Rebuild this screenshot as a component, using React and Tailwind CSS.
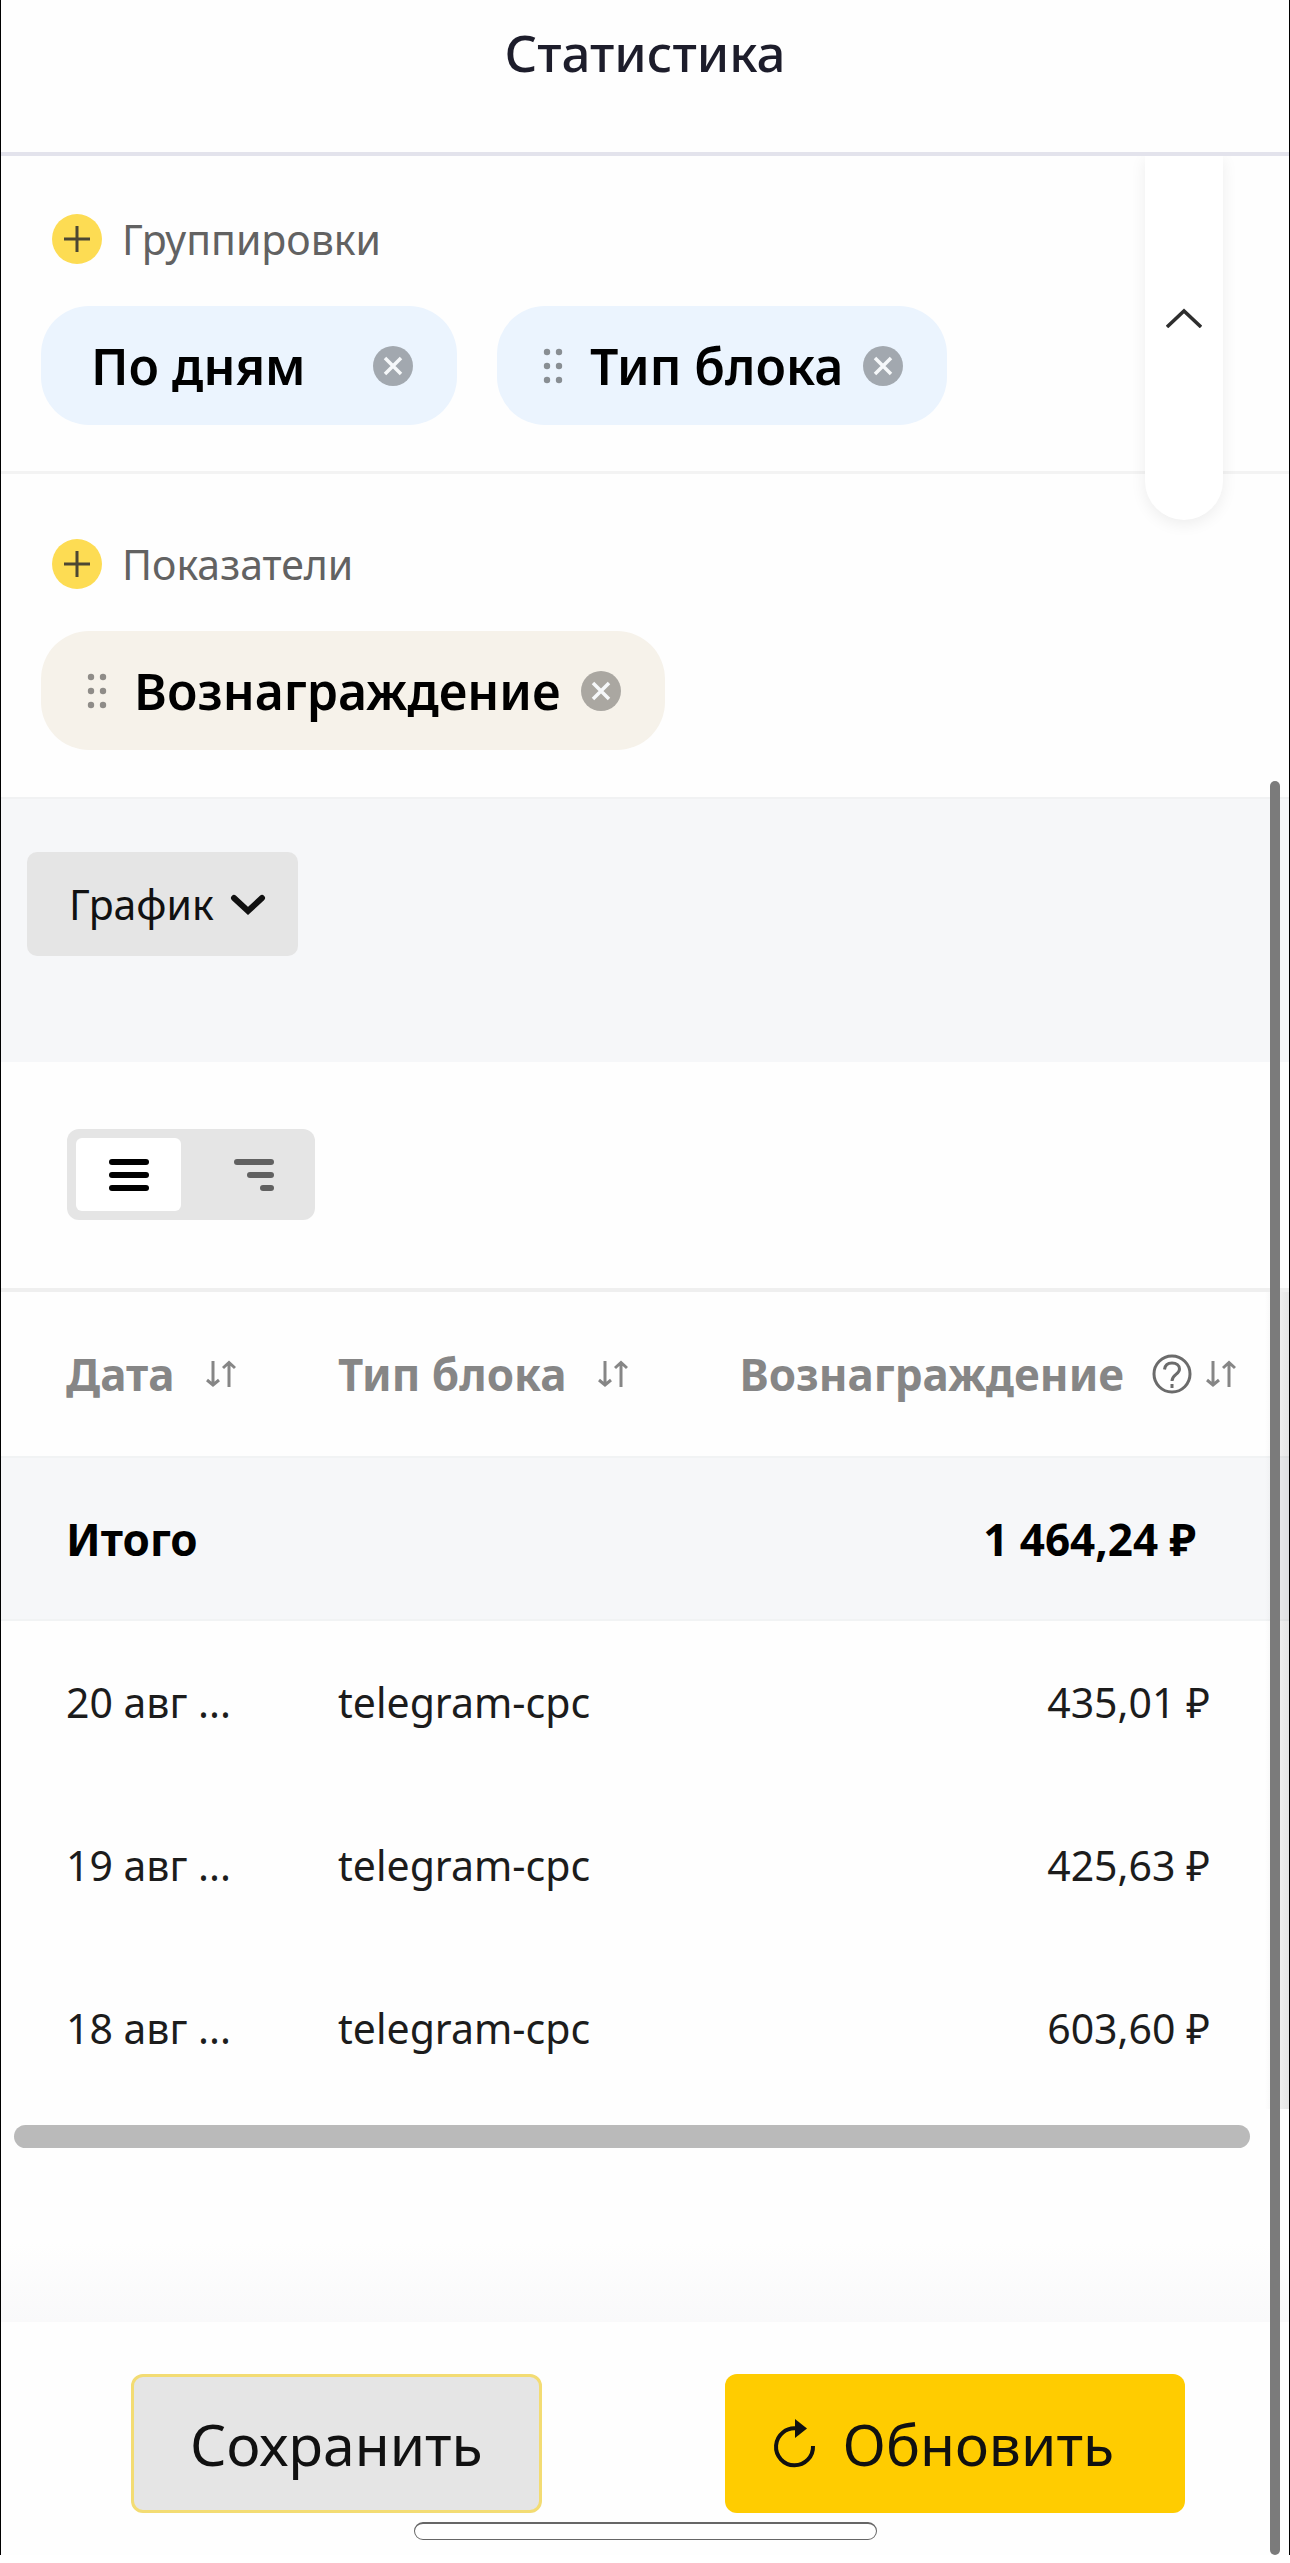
import { useState } from "react";

const rows = [
  { id: 1, date: "20 авг ...", block: "telegram-cpc", reward: "435,01 ₽" },
  { id: 2, date: "19 авг ...", block: "telegram-cpc", reward: "425,63 ₽" },
  { id: 3, date: "18 авг ...", block: "telegram-cpc", reward: "603,60 ₽" },
];

function SortIcon() {
  return (
    <svg
      className="w-8 h-7 shrink-0"
      fill="none"
      stroke="currentColor"
      strokeWidth={3}
      viewBox="0 0 32 28"
    >
      <path d="M9 1v24M3 20l6 5 6-5M25 27V3M19 8l6-5.500 6 5.500" />
    </svg>
  );
}

function HelpIcon() {
  return (
    <svg
      className="w-10 h-10 shrink-0"
      fill="none"
      stroke="#6b6b6b"
      strokeWidth={3}
      viewBox="0 0 40 40"
    >
      <circle cx="20" cy="20" r="18" />
      <path d="M12.500 15.500c.5-4.500 3.500-6.500 7.500-6.500 4.500 0 7.500 2.500 7.500 6 0 5.500-7.500 5.500-7.500 12" />
      <path d="M20 30v4" />
    </svg>
  );
}

function AddLabel({ text }) {
  return (
    <div className="flex items-center gap-5">
      <button
        aria-label={`Добавить: ${text}`}
        className="w-[50px] h-[50px] rounded-full bg-[#fddc53] flex items-center justify-center"
      >
        <svg
          className="w-7 h-7"
          stroke="#4c4733"
          strokeWidth={3}
          viewBox="0 0 28 28"
        >
          <path d="M14 1v26M1 14h26" />
        </svg>
      </button>
      <h2 className="text-[41px] leading-[50px] text-[#626262]">{text}</h2>
    </div>
  );
}

function DragHandle() {
  return (
    <svg
      className="w-5 h-9 shrink-0"
      fill="currentColor"
      fillOpacity={0.42}
      viewBox="0 0 20 36"
    >
      <circle cx="4" cy="4" r="3.200" />
      <circle cx="16" cy="4" r="3.200" />
      <circle cx="4" cy="18" r="3.200" />
      <circle cx="16" cy="18" r="3.200" />
      <circle cx="4" cy="32" r="3.200" />
      <circle cx="16" cy="32" r="3.200" />
    </svg>
  );
}

function RemoveButton({ label }) {
  return (
    <button aria-label={`Удалить: ${label}`} className="shrink-0">
      <svg className="w-10 h-10" viewBox="0 0 40 40">
        <circle cx="20" cy="20" r="20" fill="#000" fillOpacity={0.31} />
        <path
          d="M12 12l16 16M28 12L12 28"
          stroke="#f6f8fa"
          strokeWidth={3.5}
        />
      </svg>
    </button>
  );
}

export default function App() {
  const [view, setView] = useState("list");

  return (
    <div className="min-h-screen bg-white pb-2 font-['Noto_Sans',sans-serif] text-black">
      <div className="relative border-x border-black bg-[#fefefe]">
        {/* Header */}
        <header className="border-b-4 border-[#e3e3ec] pt-4 pb-16 text-center">
          <h1 className="text-[51px] leading-[72px] font-medium text-[#1d1d2b]">
            Статистика
          </h1>
        </header>

        {/* Filters */}
        <div className="relative">
          <section className="flex flex-col gap-[42px] border-b-[3px] border-[#f3f3f3] px-10 pt-[58px] pb-[46px]">
            <div className="pl-[11px]">
              <AddLabel text="Группировки" />
            </div>
            <div className="flex gap-10">
              <div className="flex items-center justify-between min-w-[416px] h-[119px] rounded-[48px] bg-[#ebf4fe] pl-[50px] pr-11">
                <span className="text-[50px] leading-[72px] font-semibold">
                  По дням
                </span>
                <RemoveButton label="По дням" />
              </div>
              <div className="flex items-center h-[119px] rounded-[48px] bg-[#ebf4fe] pl-[46px] pr-11">
                <DragHandle />
                <span className="ml-[27px] mr-5 text-[50px] leading-[72px] font-semibold">
                  Тип блока
                </span>
                <RemoveButton label="Тип блока" />
              </div>
            </div>
          </section>

          <section className="flex flex-col gap-[42px] px-10 pt-[65px] pb-[47px]">
            <div className="pl-[11px]">
              <AddLabel text="Показатели" />
            </div>
            <div className="flex">
              <div className="flex items-center h-[119px] rounded-[48px] bg-[#f6f2ea] pl-[46px] pr-11">
                <DragHandle />
                <span className="ml-[27px] mr-5 text-[50px] leading-[72px] font-semibold">
                  Вознаграждение
                </span>
                <RemoveButton label="Вознаграждение" />
              </div>
            </div>
          </section>

          <button
            aria-label="Свернуть"
            className="absolute top-0 right-[66px] w-[78px] h-[364px] rounded-b-full bg-white pb-10 flex items-center justify-center shadow-[0_4px_16px_rgba(0,0,0,0.07)] [clip-path:inset(0_-40px_-40px_-40px)]"
          >
            <svg
              className="w-9 h-5"
              fill="none"
              stroke="#2e2e2e"
              strokeWidth={3.5}
              viewBox="0 0 36 20"
            >
              <path d="M1 19L18 3l17 16" />
            </svg>
          </button>
        </div>

        {/* Chart */}
        <section className="bg-[#f6f7f9] border-t-2 border-[#f1f2f3] pt-[53px] pb-[106px] pl-[26px]">
          <button className="flex items-center gap-4 h-[104px] rounded-[10px] bg-[#e5e5e5] pl-[42px] pr-8">
            <span className="text-[41px] leading-[56px] text-[#111]">
              График
            </span>
            <svg
              className="w-9 h-6"
              fill="none"
              stroke="#111"
              strokeWidth={6}
              strokeLinecap="round"
              viewBox="0 0 36 24"
            >
              <path d="M4 6l14 13L32 6" />
            </svg>
          </button>
        </section>

        {/* View switch */}
        <div className="flex px-[66px] pt-[67px] pb-[68px]">
          <div className="flex gap-5 rounded-xl bg-[#e5e5e5] p-[9px]">
            <button
              aria-label="Список"
              aria-pressed={view === "list"}
              onClick={() => setView("list")}
              className={`w-[105px] h-[73px] rounded-md flex items-center justify-center ${view === "list" ? "bg-white text-black" : "text-[#616161]"}`}
            >
              <svg
                className="w-10 h-[34px]"
                fill="currentColor"
                viewBox="0 0 40 34"
              >
                <rect y="1" width="40" height="6" rx="3" />
                <rect y="14" width="40" height="6" rx="3" />
                <rect y="27" width="40" height="6" rx="3" />
              </svg>
            </button>
            <button
              aria-label="Дерево"
              aria-pressed={view === "tree"}
              onClick={() => setView("tree")}
              className={`w-[105px] h-[73px] rounded-md flex items-center justify-center ${view === "tree" ? "bg-white text-black" : "text-[#616161]"}`}
            >
              <svg
                className="w-10 h-[34px]"
                fill="currentColor"
                viewBox="0 0 40 34"
              >
                <rect y="1" width="40" height="6" rx="3" />
                <rect x="13" y="14" width="27" height="6" rx="3" />
                <rect x="26" y="27" width="14" height="6" rx="3" />
              </svg>
            </button>
          </div>
        </div>

        {/* Table */}
        <div className="relative border-t-4 border-[#efefef]">
          <table className="w-full text-left">
            <thead>
              <tr className="h-[165px] text-[44px] leading-[60px] text-[#868686]">
                <th className="w-[337px] pl-[65px] font-bold">
                  <span className="flex items-center gap-[30px]">
                    Дата <SortIcon />
                  </span>
                </th>
                <th className="font-bold">
                  <span className="flex items-center gap-[30px]">
                    Тип блока <SortIcon />
                  </span>
                </th>
                <th className="pr-[53px] font-bold">
                  <span className="flex items-center justify-end gap-3">
                    <span className="mr-4">Вознаграждение</span>
                    <HelpIcon />
                    <SortIcon />
                  </span>
                </th>
              </tr>
            </thead>
            <tbody className="text-[41px] leading-[56px] text-[#1c1c1c]">
              <tr className="h-[163px] border-y-2 border-[#f1f3f4] bg-[#f6f7f9] text-[44px] leading-[60px] text-black">
                <th className="pl-[65px] font-bold">Итого</th>
                <td></td>
                <td className="pr-[93px] text-right font-bold">1 464,24 ₽</td>
              </tr>
              {rows.map((row) => (
                <tr key={row.id} className="h-[163px]">
                  <td className="pl-[65px]">{row.date}</td>
                  <td>{row.block}</td>
                  <td className="pr-[79px] text-right">{row.reward}</td>
                </tr>
              ))}
            </tbody>
          </table>
          <div className="absolute inset-y-0 right-0 w-6 bg-gradient-to-r from-transparent to-black/10"></div>
        </div>

        {/* Horizontal scrollbar */}
        <div className="pt-4 pl-[13px] pr-[39px]">
          <div className="h-[23px] rounded-full bg-[#bababa]"></div>
        </div>
        <div className="pt-[94px]">
          <div className="h-20 bg-gradient-to-b from-transparent to-[#f9f9fa]"></div>
        </div>

        {/* Actions */}
        <footer className="bg-[#fefefe] pt-[52px] pb-[15px]">
          <div className="flex justify-between pl-[130px] pr-[104px] text-[57px] leading-[78px] text-[#111]">
            <button className="h-[139px] rounded-xl border-[3px] border-[#f3dc73] bg-[#e5e5e5] px-14">
              Сохранить
            </button>
            <button className="flex items-center gap-[26px] h-[139px] rounded-xl bg-[#ffcc00] pl-12 pr-[71px]">
              <svg
                className="w-11 h-[50px]"
                fill="none"
                stroke="#111"
                strokeWidth={4}
                viewBox="0 0 44 50"
              >
                <path d="M24 9.500A18.500 18.500 0 1 0 40 27" />
                <path d="M22 0l12 9.500-12 9.500z" fill="#111" stroke="none" />
              </svg>
              Обновить
            </button>
          </div>
          <div className="mx-auto mt-[9px] w-[463px] h-[18px] rounded-full border border-t-2 border-[#666] bg-white"></div>
        </footer>

        {/* Page scrollbar */}
        <div className="absolute top-[781px] bottom-0 right-[9px] w-[10px] rounded-full bg-[#7b7b7b]"></div>
      </div>
    </div>
  );
}
